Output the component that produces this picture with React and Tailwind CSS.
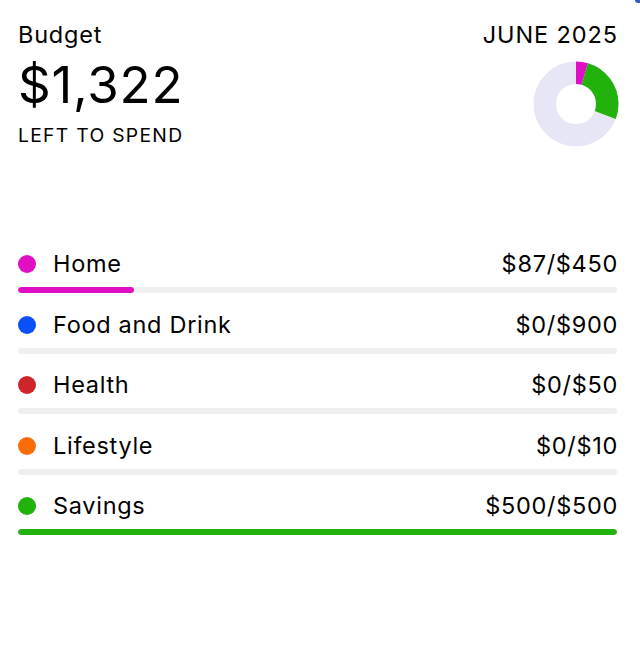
import React from "react";

const categories = [
  { name: "Home", spent: 87, budget: 450, color: "bg-[#e00fc4]" },
  { name: "Food and Drink", spent: 0, budget: 900, color: "bg-[#0a4ff7]" },
  { name: "Health", spent: 0, budget: 50, color: "bg-[#cf252a]" },
  { name: "Lifestyle", spent: 0, budget: 10, color: "bg-[#fb6c09]" },
  { name: "Savings", spent: 500, budget: 500, color: "bg-[#22b20c]" },
];

function Donut() {
  const total = categories.reduce((s, c) => s + c.budget, 0);
  const r = 31.25;
  let offset = 0;
  const hex = { Home: "#e00fc4", Savings: "#22b20c" };
  return (
    <svg width="86" height="86" viewBox="0 0 86 86" className="block">
      <circle cx="43" cy="43" r={r} fill="none" stroke="#e6e6f6" strokeWidth="22.5" />
      {categories.map((c) => {
        const frac = c.spent / total;
        const start = offset;
        offset += frac;
        if (!frac) return null;
        return (
          <circle
            key={c.name}
            cx="43"
            cy="43"
            r={r}
            fill="none"
            stroke={hex[c.name]}
            strokeWidth="22.5"
            pathLength="100"
            strokeDasharray={`${frac * 100} 100`}
            strokeDashoffset={-start * 100}
            transform="rotate(-90 43 43)"
          />
        );
      })}
    </svg>
  );
}

export default function App() {
  return (
    <div className="relative w-[640px] h-[652px] bg-white text-black font-['Inter',sans-serif] overflow-hidden">
      <div className="absolute top-0 right-0 w-[5px] h-[3px] bg-[#3a55c4] rounded-bl-full" />
      <div className="pl-[18px] pr-[23px] pt-[20px]">
        <div className="flex justify-between">
          <div>
            <div className="text-[23.5px] leading-[30px] tracking-[0.8px]">Budget</div>
            <div className="text-[51px] leading-[56px] mt-[7px] tracking-[0.8px]">$1,322</div>
            <div className="text-[19.3px] leading-[24px] mt-[10px] tracking-[1.3px]">LEFT TO SPEND</div>
          </div>
          <div className="flex flex-col items-end">
            <div className="text-[23.5px] leading-[30px] tracking-[0.9px] -mr-[1px]">JUNE 2025</div>
            <div className="mt-[11px] -mr-[2px]">
              <Donut />
            </div>
          </div>
        </div>

        <div className="mt-[102px] flex flex-col gap-[16.5px]">
          {categories.map((c) => (
            <div key={c.name}>
              <div className="flex items-center justify-between h-[30px]">
                <div className="flex items-center">
                  <span className={`w-[18px] h-[18px] rounded-full ${c.color}`} />
                  <span className="ml-[17px] text-[23.5px] tracking-[0.7px]">{c.name}</span>
                </div>
                <span className="text-[23.5px] tracking-[0.7px] -mr-[1px]">
                  ${c.spent}/${c.budget}
                </span>
              </div>
              <div className="mt-[8px] h-[6px] rounded-full bg-[#efefef] overflow-hidden">
                <div
                  className={`h-full rounded-full ${c.color}`}
                  style={{ width: `${(c.spent / c.budget) * 100}%` }}
                />
              </div>
            </div>
          ))}
        </div>
      </div>
    </div>
  );
}
